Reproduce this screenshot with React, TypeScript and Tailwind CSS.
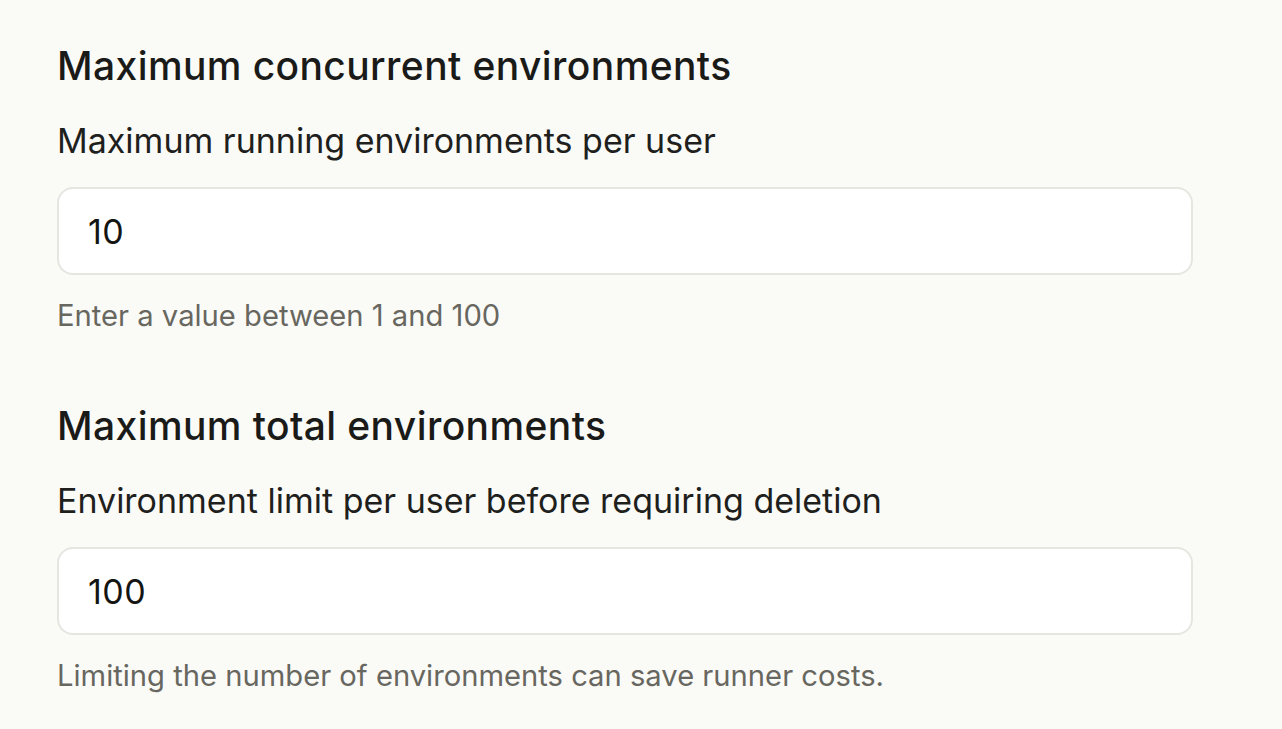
const fieldset = [
  {
    title: 'Maximum concurrent environments',
    label: 'Maximum running environments per user',
    value: '10',
    hint: 'Enter a value between 1 and 100',
  },
  {
    title: 'Maximum total environments',
    label: 'Environment limit per user before requiring deletion',
    value: '100',
    hint: 'Limiting the number of environments can save runner costs.',
  },
];

const LimitField = ({ title, label, value, hint }: (typeof fieldset)[number]) => (
  <section className="flex flex-col">
    <h2 className="text-[39px] leading-[44px] font-medium tracking-[0.4px] text-[#1a1a18]">
      {title}
    </h2>
    <label className="mt-[33px] text-[34px] leading-[40px] text-[#1f1f1d]">{label}</label>
    <input
      defaultValue={value}
      className="mt-[26px] h-[88px] w-[1136px] rounded-[16px] border-2 border-[#e6e6e1] bg-white px-[29px] text-[34px] tracking-[0.5px] text-[#141413] outline-none"
    />
    <p className="mt-[23px] text-[29.2px] leading-[36px] text-[#68675f]">{hint}</p>
  </section>
);

export default function App() {
  return (
    <div
      className="min-h-screen bg-[#fafaf7] pl-[57px] pt-[44px]"
      style={{ fontFamily: 'Inter, "Noto Sans", sans-serif' }}
    >
      <div className="flex flex-col gap-[70px]">
        {fieldset.map((f) => (
          <LimitField key={f.title} {...f} />
        ))}
      </div>
    </div>
  );
}
